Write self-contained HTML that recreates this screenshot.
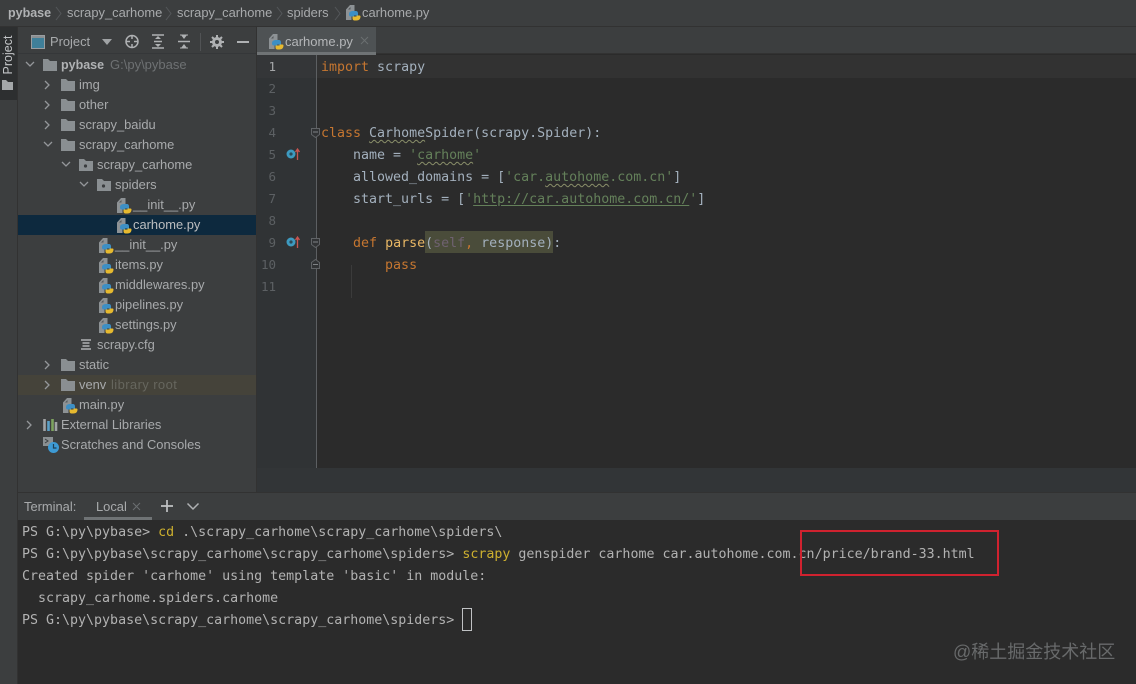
<!DOCTYPE html>
<html><head><meta charset="utf-8">
<style>
html,body{margin:0;padding:0;width:1136px;height:684px;overflow:hidden;background:#2b2b2b}
#r{position:relative;width:1136px;height:684px;overflow:hidden;font-family:"Liberation Sans",sans-serif;filter:blur(.3px)}
.a{position:absolute}
.t{position:absolute;white-space:pre;font-size:12.9px;line-height:20px;color:#a8aaac}
.m{position:absolute;margin-top:2px;white-space:pre;font-family:"DejaVu Sans Mono",monospace;font-size:13.3px;line-height:22px;color:#a3b0bd}
.n{position:absolute;margin-top:1px;left:257px;width:19px;text-align:right;font-family:"DejaVu Sans Mono",monospace;font-size:12.5px;line-height:22px;color:#5c6063}
.k{color:#c57630}.s{color:#64805a}
.w{text-decoration:underline wavy #8a8f6a 1px;text-underline-offset:2px}
svg{position:absolute;overflow:visible}
.tr{position:absolute;margin-top:2px;white-space:pre;font-family:"DejaVu Sans Mono",monospace;font-size:13.3px;line-height:22px;color:#b2b2b2;left:22px}
</style></head><body>
<div id="r">
<svg width="0" height="0" style="position:absolute">
<defs>
<g id="py"><path d="M0 4.500L4 0h4.500v7H5.500v8H0z" fill="#8d9295"/><path d="M2 4.500L4.500 2v2.500z" fill="#55585a"/>
<path d="M3 9.500C3 7 4.500 6 7 6h2.500C11.500 6 12 7 12 8.500V10.500H8V11.500H5.500C3.800 11.500 3 11 3 9.500z" fill="#3d8fc4"/>
<path d="M14.500 11.500C14.500 14 13 15.500 10.500 15.500H9C7 15.500 6.500 14.500 6.500 13V11.500H10.500V10.500H13C14 10.500 14.500 10.800 14.500 11.500z" fill="#e6b92f"/></g>
<g id="f"><path d="M0 2h5l2 2h7v10H0z" fill="#8a8f92"/></g>
<g id="fd"><path d="M0 2h5l2 2h7v10H0z" fill="#8a8f92"/><circle cx="6.500" cy="9" r="1.600" fill="#3a3d3f"/></g>
<path id="cr" d="M0 0l4 4-4 4" fill="none" stroke="#94979a" stroke-width="1.300"/>
<path id="cd" d="M0 0l4 4 4-4" fill="none" stroke="#94979a" stroke-width="1.300"/>
<g id="ov"><circle cx="5" cy="6" r="4.500" fill="#3d9ac0"/><circle cx="5" cy="6" r="1.600" fill="#2b4a58"/><path d="M11.500 12V2M9.500 4l2-3 2 3" stroke="#c75450" stroke-width="1.300" fill="none"/></g>
</defs>
</svg>

<!-- Chrome backgrounds -->
<div class="a" style="left:0;top:0;width:1136px;height:27px;background:#3c3e3f;border-bottom:1px solid #323232;box-sizing:border-box"></div>
<div class="a" style="left:0;top:27px;width:18px;height:657px;background:#3c3e3f;border-right:1px solid #323232;box-sizing:border-box"></div>
<div class="a" style="left:0;top:27px;width:17px;height:73px;background:#2d2f30"></div>
<div class="a" style="left:18px;top:27px;width:239px;height:465px;background:#3c3e3f;border-right:1px solid #323232;box-sizing:border-box"></div>
<div class="a" style="left:18px;top:27px;width:238px;height:27px;border-bottom:1px solid #353739;box-sizing:border-box"></div>
<div class="a" style="left:257px;top:27px;width:879px;height:27px;background:#3c3e3f;border-bottom:1px solid #323232;box-sizing:border-box"></div>
<div class="a" style="left:257px;top:27px;width:119px;height:26px;background:#4e5254"></div>
<div class="a" style="left:257px;top:52px;width:119px;height:3px;background:#6f7375"></div>
<!-- Editor -->
<div class="a" style="left:257px;top:55px;width:879px;height:413px;background:#2b2b2b"></div>
<div class="a" style="left:257px;top:55px;width:59px;height:413px;background:#303335"></div>
<div class="a" style="left:257px;top:55px;width:879px;height:23px;background:#323232"></div>
<div class="a" style="left:257px;top:55px;width:59px;height:23px;background:#343638"></div>
<div class="a" style="left:316px;top:55px;width:1px;height:413px;background:#5c5f62"></div>
<div class="a" style="left:257px;top:468px;width:879px;height:24px;background:#323537"></div>
<!-- Terminal -->
<div class="a" style="left:18px;top:492px;width:1118px;height:28px;background:#3c3e3f;border-top:1px solid #323232;box-sizing:border-box"></div>
<div class="a" style="left:18px;top:520px;width:1118px;height:164px;background:#2b2b2b"></div>
<div class="a" style="left:84px;top:517px;width:68px;height:3px;background:#6f7375"></div>

<!-- Breadcrumbs -->
<div class="t" style="left:8px;top:3px;font-weight:bold;font-size:12.5px;color:#b0b2b4">pybase</div>
<div class="t" style="left:67px;top:3px">scrapy_carhome</div>
<div class="t" style="left:177px;top:3px">scrapy_carhome</div>
<div class="t" style="left:287px;top:3px">spiders</div>
<div class="t" style="left:362px;top:3px">carhome.py</div>
<svg style="left:56px;top:7px" width="6" height="13"><path d="M0 0l5 6.500-5 6.500" fill="none" stroke="#54575a"/></svg>
<svg style="left:166px;top:7px" width="6" height="13"><path d="M0 0l5 6.500-5 6.500" fill="none" stroke="#54575a"/></svg>
<svg style="left:277px;top:7px" width="6" height="13"><path d="M0 0l5 6.500-5 6.500" fill="none" stroke="#54575a"/></svg>
<svg style="left:335px;top:7px" width="6" height="13"><path d="M0 0l5 6.500-5 6.500" fill="none" stroke="#54575a"/></svg>
<svg style="left:346px;top:5px" width="15" height="16"><use href="#py"/></svg>

<!-- Left strip -->
<div class="t" style="left:-14px;top:45px;width:44px;text-align:center;transform:rotate(-90deg);color:#c4c6c8;font-size:12.5px">Project</div>
<svg style="left:2px;top:80px" width="12" height="11"><path d="M0 0h4l2 2h5v8H0z" fill="#a4a7a9"/></svg>

<!-- Project toolbar -->
<svg style="left:31px;top:35px" width="14" height="14"><rect x=".5" y=".5" width="13" height="13" fill="#3f7f99" stroke="#9a9da0"/><rect x="1" y="1" width="12" height="2" fill="#8a8f92"/></svg>
<div class="t" style="left:50px;top:32px">Project</div>
<svg style="left:102px;top:39px" width="10" height="6"><path d="M0 0h10l-5 6z" fill="#a0a3a5"/></svg>
<svg style="left:125px;top:34px" width="15" height="15"><circle cx="7" cy="7.500" r="6" fill="none" stroke="#afb1b3" stroke-width="1.500"/><path d="M7 1v4M7 10v4M1 7.500h4M9 7.500h4" stroke="#afb1b3" stroke-width="1.500"/></svg>
<svg style="left:151px;top:34px" width="14" height="15"><path d="M1 1h12M1 14h12M3 7.500h8" stroke="#afb1b3" stroke-width="1.500"/><path d="M4 5l3-3 3 3zM4 10l3 3 3-3z" fill="#afb1b3"/></svg>
<svg style="left:177px;top:34px" width="14" height="15"><path d="M1 7.500h12" stroke="#afb1b3" stroke-width="1.500"/><path d="M4 1l3 4 3-4zM4 14l3-4 3 4z" fill="#afb1b3"/><path d="M3 1h8M3 14h8" stroke="#afb1b3"/></svg>
<div class="a" style="left:200px;top:33px;width:1px;height:18px;background:#515355"></div>
<svg style="left:210px;top:35px" width="14" height="14"><circle cx="7" cy="7" r="3.500" fill="none" stroke="#afb1b3" stroke-width="3"/><path d="M7 0v3M7 11v3M0 7h3M11 7h3M2 2l2 2M10 10l2 2M12 2l-2 2M4 10l-2 2" stroke="#afb1b3" stroke-width="2"/></svg>
<div class="a" style="left:237px;top:41px;width:12px;height:2px;background:#afb1b3"></div>

<!-- Tab -->
<svg style="left:269px;top:34px" width="15" height="16"><use href="#py"/></svg>
<div class="t" style="left:285px;top:32px;color:#b4b6b8;font-size:13px">carhome.py</div>
<svg style="left:361px;top:37px" width="7" height="7"><path d="M0 0l7 7M7 0l-7 7" stroke="#6b6f71"/></svg>

<!-- Tree highlight rows -->
<div class="a" style="left:18px;top:215px;width:238px;height:20px;background:#0d293e"></div>
<div class="a" style="left:18px;top:375px;width:238px;height:20px;background:#45433a"></div>

<!-- Tree -->
<svg style="left:26px;top:62px" width="9" height="5"><use href="#cd"/></svg>
<svg style="left:43px;top:57px" width="14" height="15"><use href="#f"/></svg>
<div class="t" style="left:61px;top:55px;font-weight:bold;font-size:12.5px;color:#b0b2b4">pybase</div>
<div class="t" style="left:110px;top:55px;color:#6e7173;font-size:13px">G:\py\pybase</div>

<svg style="left:45px;top:81px" width="5" height="9"><use href="#cr"/></svg>
<svg style="left:61px;top:77px" width="14" height="15"><use href="#f"/></svg>
<div class="t" style="left:79px;top:75px">img</div>

<svg style="left:45px;top:101px" width="5" height="9"><use href="#cr"/></svg>
<svg style="left:61px;top:97px" width="14" height="15"><use href="#f"/></svg>
<div class="t" style="left:79px;top:95px">other</div>

<svg style="left:45px;top:121px" width="5" height="9"><use href="#cr"/></svg>
<svg style="left:61px;top:117px" width="14" height="15"><use href="#f"/></svg>
<div class="t" style="left:79px;top:115px">scrapy_baidu</div>

<svg style="left:44px;top:142px" width="9" height="5"><use href="#cd"/></svg>
<svg style="left:61px;top:137px" width="14" height="15"><use href="#f"/></svg>
<div class="t" style="left:79px;top:135px">scrapy_carhome</div>

<svg style="left:62px;top:162px" width="9" height="5"><use href="#cd"/></svg>
<svg style="left:79px;top:157px" width="14" height="15"><use href="#fd"/></svg>
<div class="t" style="left:97px;top:155px">scrapy_carhome</div>

<svg style="left:80px;top:182px" width="9" height="5"><use href="#cd"/></svg>
<svg style="left:97px;top:177px" width="14" height="15"><use href="#fd"/></svg>
<div class="t" style="left:115px;top:175px">spiders</div>

<svg style="left:117px;top:198px" width="15" height="16"><use href="#py"/></svg>
<div class="t" style="left:133px;top:195px">__init__.py</div>
<svg style="left:117px;top:218px" width="15" height="16"><use href="#py"/></svg>
<div class="t" style="left:133px;top:215px;color:#bcbec0">carhome.py</div>

<svg style="left:99px;top:238px" width="15" height="16"><use href="#py"/></svg>
<div class="t" style="left:115px;top:235px">__init__.py</div>
<svg style="left:99px;top:258px" width="15" height="16"><use href="#py"/></svg>
<div class="t" style="left:115px;top:255px">items.py</div>
<svg style="left:99px;top:278px" width="15" height="16"><use href="#py"/></svg>
<div class="t" style="left:115px;top:275px">middlewares.py</div>
<svg style="left:99px;top:298px" width="15" height="16"><use href="#py"/></svg>
<div class="t" style="left:115px;top:295px">pipelines.py</div>
<svg style="left:99px;top:318px" width="15" height="16"><use href="#py"/></svg>
<div class="t" style="left:115px;top:315px">settings.py</div>

<svg style="left:81px;top:339px" width="10" height="11"><path d="M0 1h10M1.500 4h7M1.500 7h7M0 10h10" stroke="#afb1b3" stroke-width="1.400"/></svg>
<div class="t" style="left:97px;top:335px">scrapy.cfg</div>

<svg style="left:45px;top:361px" width="5" height="9"><use href="#cr"/></svg>
<svg style="left:61px;top:357px" width="14" height="15"><use href="#f"/></svg>
<div class="t" style="left:79px;top:355px">static</div>

<svg style="left:45px;top:381px" width="5" height="9"><use href="#cr"/></svg>
<svg style="left:61px;top:377px" width="14" height="15"><use href="#f"/></svg>
<div class="t" style="left:79px;top:375px">venv</div>
<div class="t" style="left:111px;top:375px;color:#66665e;font-size:13px;letter-spacing:.4px">library root</div>

<svg style="left:63px;top:398px" width="15" height="16"><use href="#py"/></svg>
<div class="t" style="left:79px;top:395px">main.py</div>

<svg style="left:27px;top:421px" width="5" height="9"><use href="#cr"/></svg>
<svg style="left:43px;top:418px" width="15" height="14"><path d="M1.500 1v12" stroke="#a0a3a5" stroke-width="2.600"/><path d="M5.500 3v10" stroke="#5aa0c8" stroke-width="2.600"/><path d="M9.500 1v12" stroke="#7da35f" stroke-width="2.600"/><path d="M13 4v9" stroke="#a0a3a5" stroke-width="2.600"/></svg>
<div class="t" style="left:61px;top:415px">External Libraries</div>

<svg style="left:43px;top:437px" width="16" height="17"><rect x="0" y="0" width="10" height="9" fill="#8a8f92"/><path d="M2 2l3 2-3 2" stroke="#3c3f41" fill="none"/><circle cx="10.500" cy="10.500" r="5.500" fill="#3d9ad4"/><path d="M10.500 7v4h3" stroke="#1e3f55" stroke-width="1.200" fill="none"/></svg>
<div class="t" style="left:61px;top:435px">Scratches and Consoles</div>

<!-- Line numbers -->
<div class="n" style="top:55px;color:#a4a6a8">1</div>
<div class="n" style="top:77px">2</div>
<div class="n" style="top:99px">3</div>
<div class="n" style="top:121px">4</div>
<div class="n" style="top:143px">5</div>
<div class="n" style="top:165px">6</div>
<div class="n" style="top:187px">7</div>
<div class="n" style="top:209px">8</div>
<div class="n" style="top:231px">9</div>
<div class="n" style="top:253px">10</div>
<div class="n" style="top:275px">11</div>

<!-- Gutter icons -->
<svg style="left:286px;top:148px" width="15" height="13"><use href="#ov"/></svg>
<svg style="left:286px;top:236px" width="15" height="13"><use href="#ov"/></svg>
<svg style="left:311px;top:128px" width="9" height="10"><path d="M.5.500h8v6l-4 3-4-3z" fill="#313335" stroke="#606366"/><path d="M2 4h5" stroke="#808386"/></svg>
<svg style="left:311px;top:238px" width="9" height="10"><path d="M.5.500h8v6l-4 3-4-3z" fill="#313335" stroke="#606366"/><path d="M2 4h5" stroke="#808386"/></svg>
<svg style="left:311px;top:259px" width="9" height="10"><path d="M.5 9.500h8v-6l-4-3-4 3z" fill="#313335" stroke="#606366"/><path d="M2 5.500h5" stroke="#808386"/></svg>
<div class="a" style="left:351px;top:265px;width:1px;height:33px;background:#3b3b3b"></div>

<!-- Code -->
<div class="a" style="left:425px;top:231px;width:128px;height:22px;background:#4a4c3a"></div>
<div class="m" style="left:321px;top:55px"><span class="k">import</span> scrapy</div>
<div class="m" style="left:321px;top:121px"><span class="k">class</span> <span class="w">Carhome</span>Spider(scrapy.Spider):</div>
<div class="m" style="left:321px;top:143px">    name = <span class="s">'<span class="w">carhome</span>'</span></div>
<div class="m" style="left:321px;top:165px">    allowed_domains = [<span class="s">'car.<span class="w">autohome</span>.com.cn'</span>]</div>
<div class="m" style="left:321px;top:187px">    start_urls = [<span class="s">'<span style="text-decoration:underline;text-underline-offset:2px">http://car.autohome.com.cn/</span>'</span>]</div>
<div class="m" style="left:321px;top:231px">    <span class="k">def</span> <span style="color:#e8b765">parse</span>(<span style="color:#6f6170">self</span><span class="k">,</span> response):</div>
<div class="m" style="left:321px;top:253px">        <span class="k">pass</span></div>

<!-- Terminal header -->
<div class="t" style="left:24px;top:497px">Terminal:</div>
<div class="t" style="left:96px;top:497px">Local</div>
<svg style="left:133px;top:503px" width="7" height="7"><path d="M0 0l7 7M7 0l-7 7" stroke="#6b6f71"/></svg>
<svg style="left:161px;top:500px" width="12" height="12"><path d="M6 0v12M0 6h12" stroke="#c0c2c4" stroke-width="1.700"/></svg>
<svg style="left:187px;top:503px" width="12" height="7"><path d="M.5.500l5.500 5.500 5.500-5.500" stroke="#afb1b3" stroke-width="1.500" fill="none"/></svg>

<!-- Terminal text -->
<div class="tr" style="top:520px">PS G:\py\pybase&gt; <span style="color:#cdb02f">cd</span> .\scrapy_carhome\scrapy_carhome\spiders\</div>
<div class="tr" style="top:542px">PS G:\py\pybase\scrapy_carhome\scrapy_carhome\spiders&gt; <span style="color:#cdb02f">scrapy</span> genspider carhome car.autohome.com.cn/price/brand-33.html</div>
<div class="tr" style="top:564px">Created spider 'carhome' using template 'basic' in module:</div>
<div class="tr" style="top:586px">  scrapy_carhome.spiders.carhome</div>
<div class="tr" style="top:608px">PS G:\py\pybase\scrapy_carhome\scrapy_carhome\spiders&gt;</div>
<div class="a" style="left:462px;top:608px;width:8px;height:21px;border:1px solid #c0c2c4"></div>

<!-- Red box -->
<div class="a" style="left:800px;top:530px;width:199px;height:46px;border:2px solid #d0222f;box-sizing:border-box"></div>

<!-- Watermark -->
<div class="a" style="left:953px;top:640px;white-space:pre;font-family:'Liberation Sans','Noto Sans CJK SC',sans-serif;font-size:18px;line-height:24px;color:#686a6b">@稀土掘金技术社区</div>
</div>
</body></html>
